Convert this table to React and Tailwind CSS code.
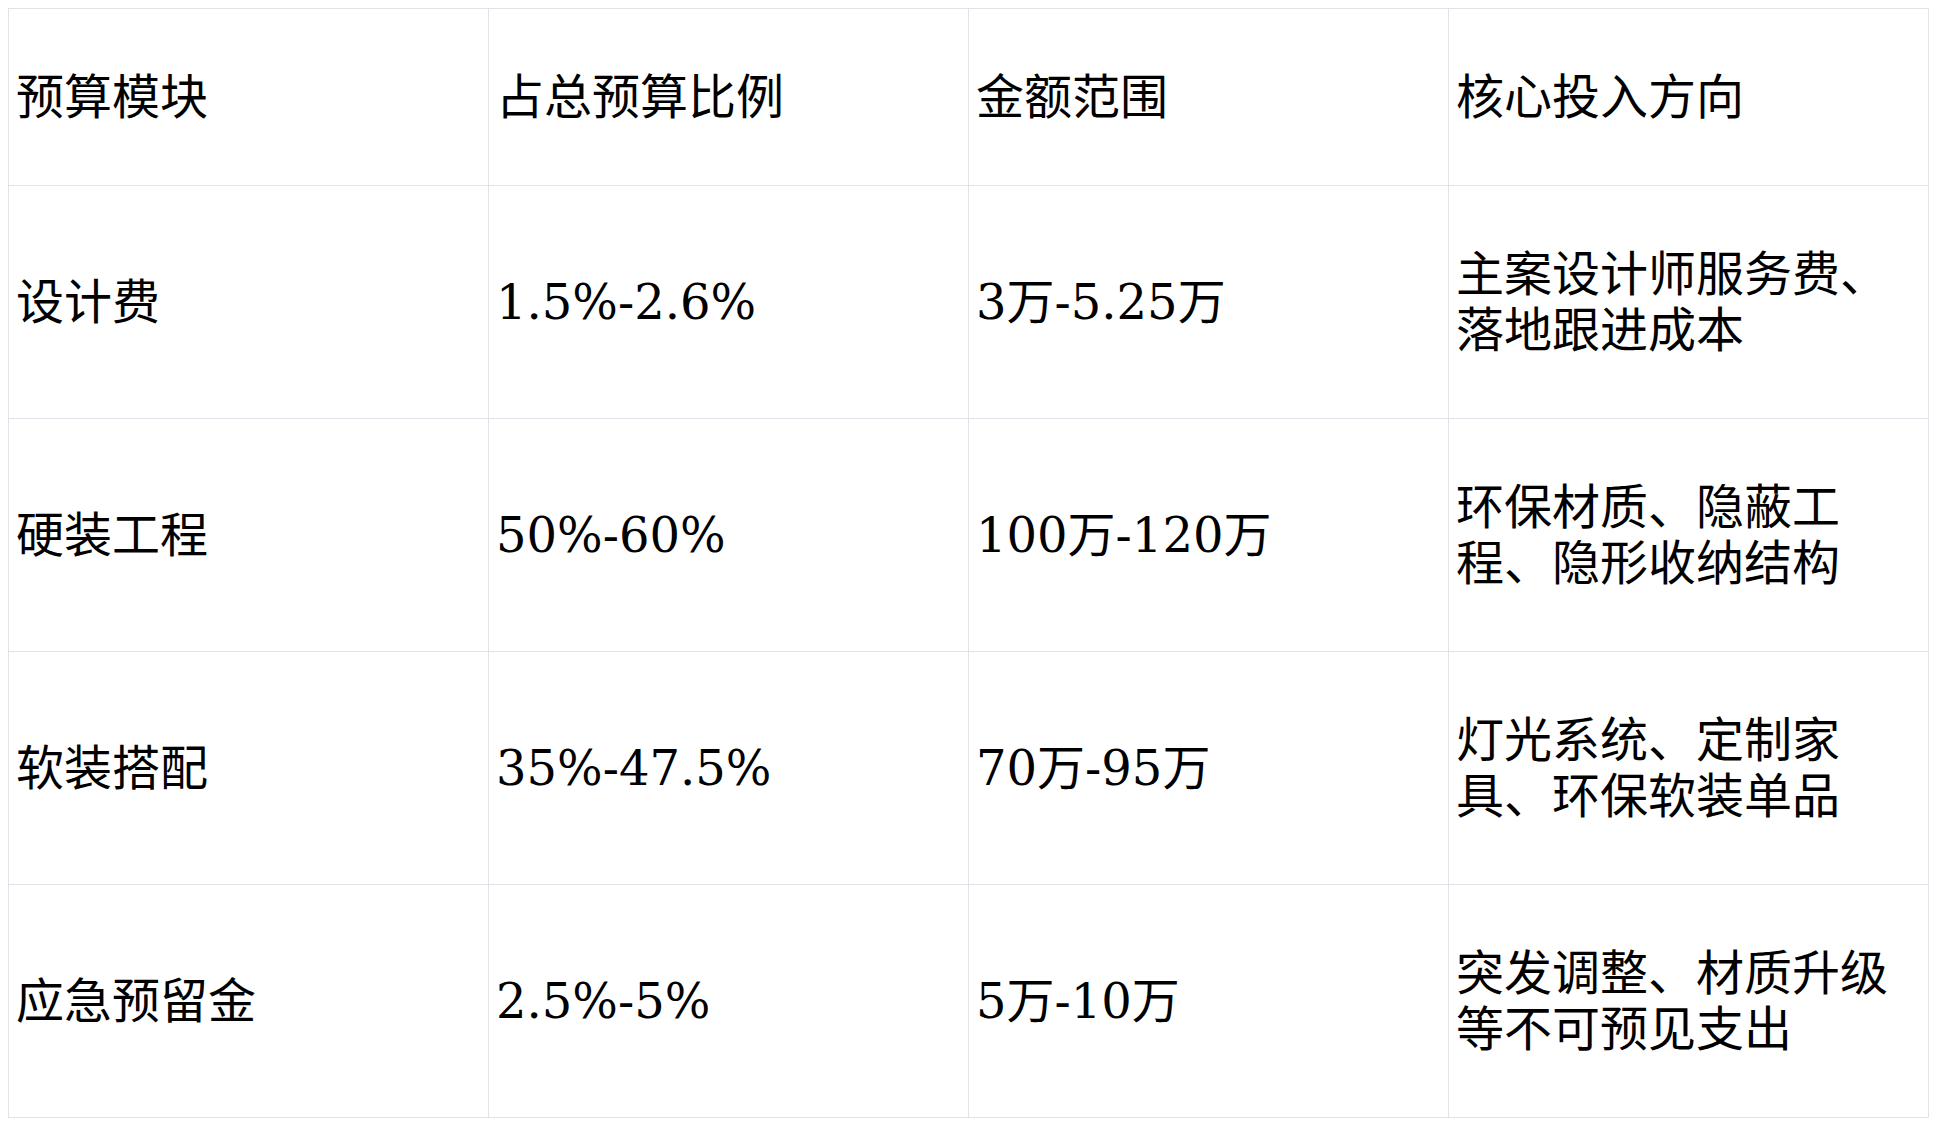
import React from "react";

const header = ["预算模块", "占总预算比例", "金额范围", "核心投入方向"];

const rows = [
    ["设计费", "1.5%-2.6%", "3万-5.25万", ["主案设计师服务费、", "落地跟进成本"]],
    ["硬装工程", "50%-60%", "100万-120万", ["环保材质、隐蔽工", "程、隐形收纳结构"]],
    ["软装搭配", "35%-47.5%", "70万-95万", ["灯光系统、定制家", "具、环保软装单品"]],
    ["应急预留金", "2.5%-5%", "5万-10万", ["突发调整、材质升级", "等不可预见支出"]],
];

function Cell({ children, tall }) {
    return (
        <div
            className={`w-[480px] ${tall ? "h-[233px]" : "h-[177px]"} border-r border-b border-[#e2e2ea] flex items-center pl-[7px] pr-2`}
        >
            <div className="leading-[56px]">{children}</div>
        </div>
    );
}

export default function App() {
    return (
        <div
            className="min-h-[1125px] bg-white p-2 text-black text-[48px]"
            style={{ fontFamily: '"DejaVu Serif", "Noto Sans CJK SC", serif' }}
        >
            <div className="inline-grid grid-cols-[repeat(4,480px)] border-l border-t border-[#e2e2ea]">
                {header.map((h) => (
                    <Cell key={h}>{h}</Cell>
                ))}
                {rows.map((r) =>
                    r.map((c, i) => (
                        <Cell key={r[0] + i} tall>
                            {Array.isArray(c)
                                ? c.map((line) => <div key={line}>{line}</div>)
                                : c}
                        </Cell>
                    ))
                )}
            </div>
        </div>
    );
}
